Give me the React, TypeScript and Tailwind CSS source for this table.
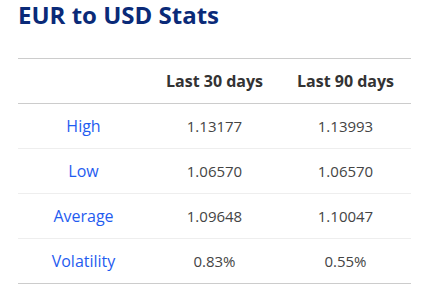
import React from 'react';

interface StatRow {
  label: string;
  d30: string;
  d90: string;
}

const rows: StatRow[] = [
  { label: 'High', d30: '1.13177', d90: '1.13993' },
  { label: 'Low', d30: '1.06570', d90: '1.06570' },
  { label: 'Average', d30: '1.09648', d90: '1.10047' },
  { label: 'Volatility', d30: '0.83%', d90: '0.55%' },
];

const App: React.FC = () => {
  return (
    <div className="min-h-screen w-[438px] bg-white px-[18px] font-['Open_Sans',sans-serif]">
      <h1 className="text-[24px] leading-[30px] font-bold text-[#0a2a78]">EUR to USD Stats</h1>

      <table className="mt-[28px] w-[393px] border-collapse table-fixed">
        <thead>
          <tr className="border-t border-b border-[#cccccc] h-[45px]">
            <th className="w-1/3"></th>
            <th className="w-1/3 text-[16px] font-bold text-[#333333]">Last 30 days</th>
            <th className="w-1/3 text-[16px] font-bold text-[#333333]">Last 90 days</th>
          </tr>
        </thead>
        <tbody>
          {rows.map((row, i) => (
            <tr
              key={row.label}
              className={`h-[45px] border-b ${i === rows.length - 1 ? 'border-[#cccccc]' : 'border-[#eeeeee]'}`}
            >
              <td className="text-center text-[16px] text-[#1f5cf0]">{row.label}</td>
              <td className="text-center text-[15px] text-[#444444]">{row.d30}</td>
              <td className="text-center text-[15px] text-[#444444]">{row.d90}</td>
            </tr>
          ))}
        </tbody>
      </table>
    </div>
  );
};

export default App;
